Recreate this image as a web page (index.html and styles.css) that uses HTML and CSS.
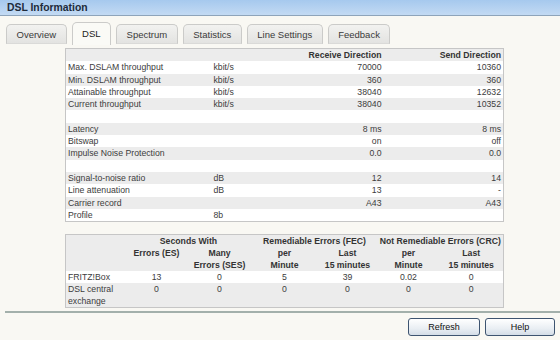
FILE: index.html
```html
<!DOCTYPE html>
<html lang="en">

<head>
    <meta charset="UTF-8">
    <title>DSL Information</title>
    <link rel="stylesheet" href="styles.css">
</head>

<body>
    <div class="titlebar">DSL Information</div>

    <div class="tabs">
        <div class="tab">Overview</div>
        <div class="tab active">DSL</div>
        <div class="tab">Spectrum</div>
        <div class="tab">Statistics</div>
        <div class="tab">Line Settings</div>
        <div class="tab">Feedback</div>
    </div>

    <div class="content">
        <table class="info">
            <colgroup>
                <col style="width: 146px">
                <col style="width: 80px">
                <col style="width: 92px">
                <col style="width: 120px">
            </colgroup>
            <tr class="head">
                <td></td>
                <td></td>
                <td class="num">Receive Direction</td>
                <td class="num">Send Direction</td>
            </tr>
            <tr><td>Max. DSLAM throughput</td><td>kbit/s</td><td class="num">70000</td><td class="num">10360</td></tr>
            <tr><td>Min. DSLAM throughput</td><td>kbit/s</td><td class="num">360</td><td class="num">360</td></tr>
            <tr><td>Attainable throughput</td><td>kbit/s</td><td class="num">38040</td><td class="num">12632</td></tr>
            <tr><td>Current throughput</td><td>kbit/s</td><td class="num">38040</td><td class="num">10352</td></tr>
            <tr><td></td><td></td><td></td><td></td></tr>
            <tr><td>Latency</td><td></td><td class="num">8 ms</td><td class="num">8 ms</td></tr>
            <tr><td>Bitswap</td><td></td><td class="num">on</td><td class="num">off</td></tr>
            <tr><td>Impulse Noise Protection</td><td></td><td class="num">0.0</td><td class="num">0.0</td></tr>
            <tr><td></td><td></td><td></td><td></td></tr>
            <tr><td>Signal-to-noise ratio</td><td>dB</td><td class="num">12</td><td class="num">14</td></tr>
            <tr><td>Line attenuation</td><td>dB</td><td class="num">13</td><td class="num">-</td></tr>
            <tr><td>Carrier record</td><td></td><td class="num">A43</td><td class="num">A43</td></tr>
            <tr><td>Profile</td><td>8b</td><td></td><td></td></tr>
        </table>

        <table class="errors">
            <colgroup>
                <col style="width: 60px">
                <col style="width: 62px">
                <col style="width: 64px">
                <col style="width: 66px">
                <col style="width: 60px">
                <col style="width: 62px">
                <col style="width: 64px">
            </colgroup>
            <tr class="head">
                <td></td>
                <td colspan="2">Seconds With</td>
                <td colspan="2">Remediable Errors (FEC)</td>
                <td colspan="2">Not Remediable Errors (CRC)</td>
            </tr>
            <tr class="head">
                <td></td>
                <td>Errors (ES)</td>
                <td>Many<br>Errors (SES)</td>
                <td>per<br>Minute</td>
                <td>Last<br>15 minutes</td>
                <td>per<br>Minute</td>
                <td>Last<br>15 minutes</td>
            </tr>
            <tr class="light">
                <td class="label">FRITZ!Box</td>
                <td>13</td><td>0</td><td>5</td><td>39</td><td>0.02</td><td>0</td>
            </tr>
            <tr class="shade">
                <td class="label">DSL central exchange</td>
                <td>0</td><td>0</td><td>0</td><td>0</td><td>0</td><td>0</td>
            </tr>
        </table>
    </div>

    <div class="footer">
        <button class="button">Refresh</button>
        <button class="button">Help</button>
    </div>
</body>

</html>
```

FILE: styles.css
```css
body {
    font-family: "Liberation Sans", Arial, sans-serif;
    background-color: #f9f8f3;
    color: #3c3c3c;
    margin: 0;
    padding: 0;
}

.titlebar {
    height: 15px;
    line-height: 15px;
    padding-left: 7px;
    font-size: 10.4px;
    font-weight: bold;
    color: #1e2b3b;
    background: linear-gradient(#a6c9ee, #c3daf3);
    border-bottom: 1px solid #8ea4ba;
}

.tabs {
    display: flex;
    align-items: flex-end;
    gap: 5px;
    height: 21px;
    padding: 7px 0 0 6px;
}

.tab {
    height: 18px;
    line-height: 19px;
    padding: 0 9.5px;
    font-size: 9.5px;
    color: #3a3a3a;
    background: linear-gradient(#f2f2f0, #e3e3e1);
    border: 1px solid #cbcbc9;
    border-bottom-color: #dadad8;
    border-radius: 5px 5px 0 0;
}

.tab.active {
    height: 22px;
    line-height: 21px;
    margin-bottom: -1px;
    color: #222;
    background: #fafaf6;
    border-bottom: none;
}

.content {
    padding: 4px 0 0 65px;
}

table {
    border-collapse: collapse;
    table-layout: fixed;
    width: 438px;
    border: 1px solid #c6c6c6;
    font-size: 8.7px;
}

td {
    padding: 0 2px;
    white-space: nowrap;
    overflow: hidden;
}

.info td {
    height: 12.3px;
    line-height: 12.3px;
}

.info tr:nth-child(odd) {
    background-color: #ececec;
}

.info tr:nth-child(even) {
    background-color: #ffffff;
}

.info .head td {
    font-weight: bold;
    color: #333;
}

.num {
    text-align: right;
}

.errors {
    margin-top: 12px;
}

.errors td {
    line-height: 12px;
    text-align: center;
    vertical-align: top;
}

.errors .head {
    background-color: #ececec;
}

.errors .head td {
    font-weight: bold;
    color: #333;
}

.errors .light {
    background-color: #ffffff;
}

.errors .shade {
    background-color: #ececec;
}

.errors .label {
    text-align: left;
    white-space: normal;
}

.footer {
    display: flex;
    justify-content: flex-end;
    gap: 5px;
    margin: 3px 0 0 5px;
    padding: 5px 5px 0 0;
    border-top: 2px solid #a3b0ab;
}

.button {
    width: 72px;
    height: 18px;
    padding: 0;
    font-family: "Liberation Sans", Arial, sans-serif;
    font-size: 9px;
    color: #111;
    background: linear-gradient(#ffffff, #e9eef3 60%, #d4dde7);
    border: 1px solid #3e5470;
    border-radius: 3px;
}

.button + .button {
    width: 70px;
}
```
